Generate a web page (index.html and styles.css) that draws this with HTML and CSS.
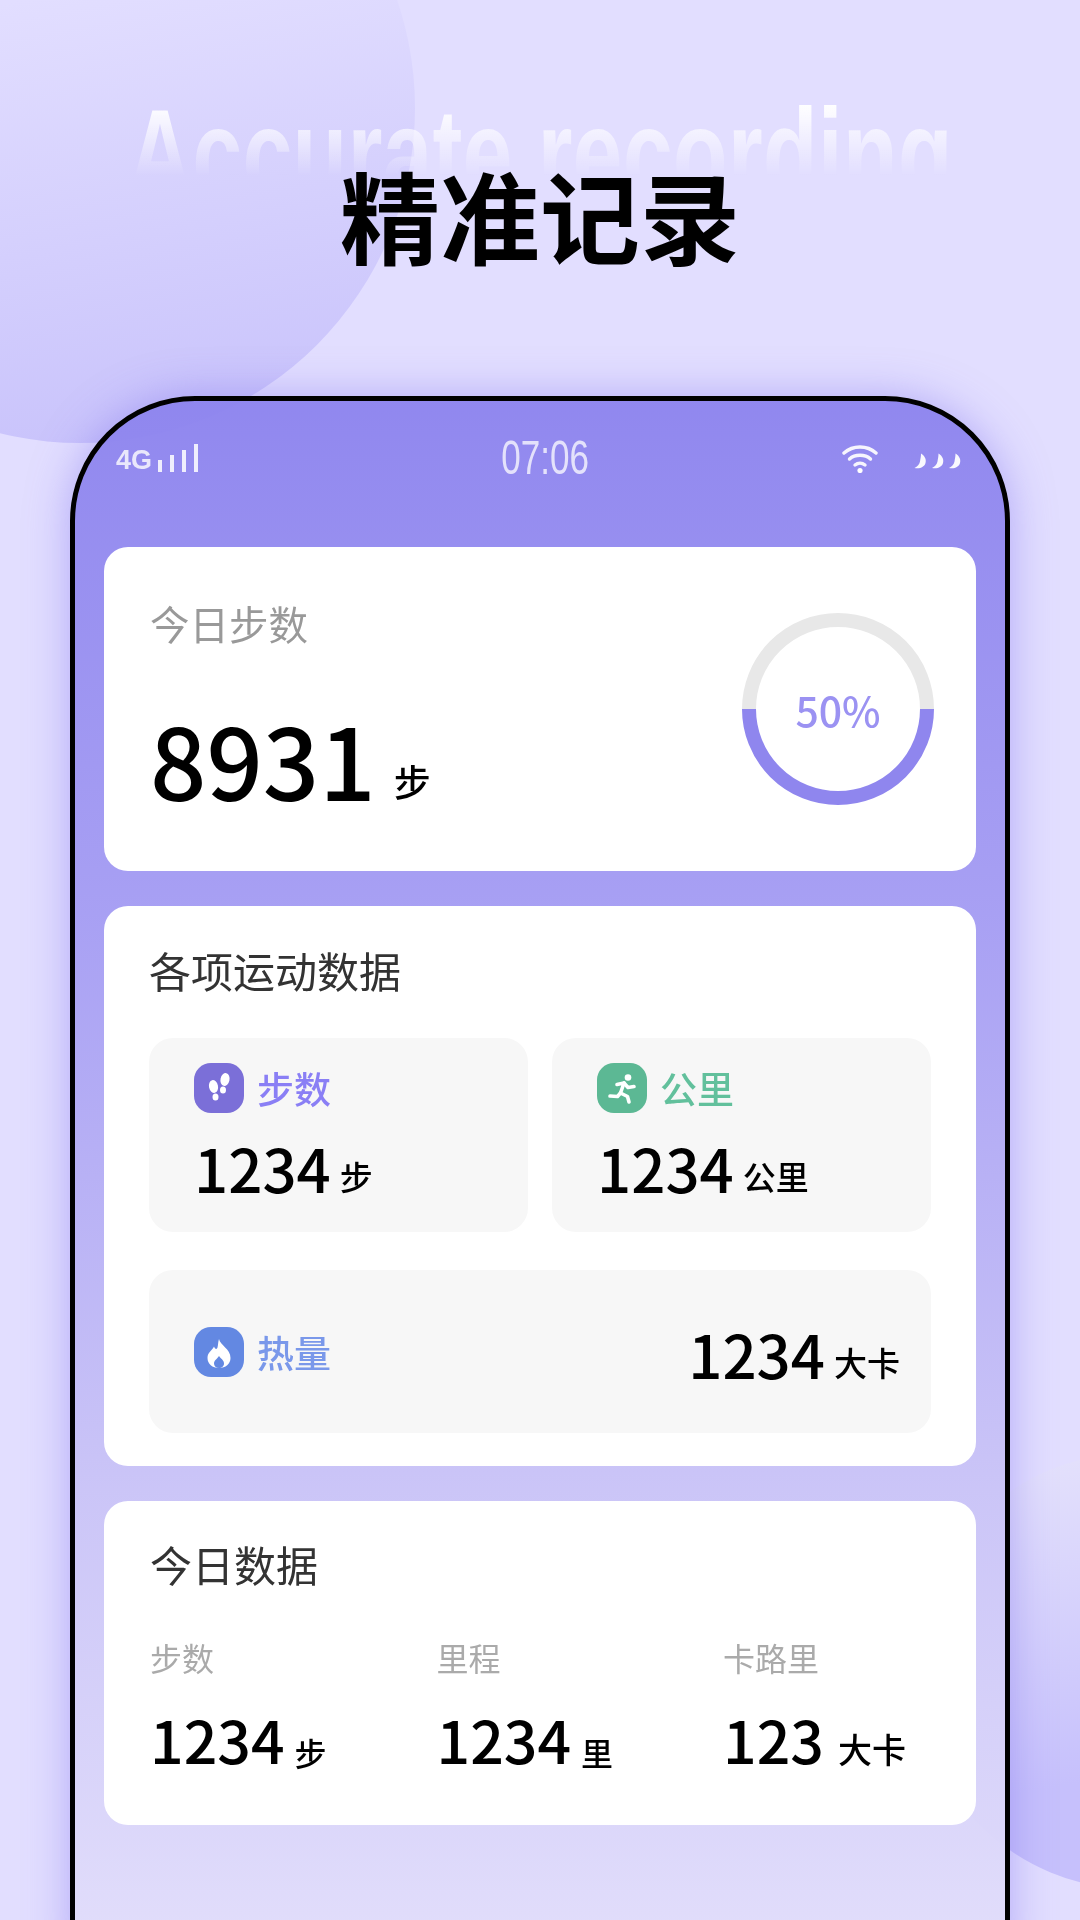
FILE: index.html
```html
<!DOCTYPE html>
<html lang="zh-CN">
<head>
<meta charset="utf-8">
<title>精准记录</title>
<link rel="stylesheet" href="styles.css">
</head>
<body>
<div class="page">
  <div class="blob blob-a"></div>
  <div class="blob blob-b"></div>
  <header class="hero">
    <div class="hero-en">Accurate recording</div>
    <h1 class="hero-cn">精准记录</h1>
  </header>
  <main class="phone">
    <div class="status">
      <div class="status-left">
        <span class="net">4G</span>
        <span class="bars"><i class="b1"></i><i class="b2"></i><i class="b3"></i><i class="b4"></i></span>
      </div>
      <div class="clock"><span>07:06</span></div>
      <div class="status-right">
        <svg class="wifi" viewBox="0 0 36 30" width="36" height="30" aria-hidden="true">
          <g fill="none" stroke="#fff" stroke-width="3.4" stroke-linecap="round" opacity=".92">
            <path d="M2 10C11 2 25 2 34 10"/>
            <path d="M7.5 16C13 11 23 11 28.5 16"/>
            <path d="M13 22C16 19.6 20 19.6 23 22"/>
          </g>
          <circle cx="18" cy="27.5" r="2.6" fill="#fff"/>
        </svg>
        <svg class="moons" viewBox="0 0 47 16" width="47" height="16" aria-hidden="true">
          <g fill="#fff" opacity=".95">
            <path d="M7 0.500C11 3 12.500 6.500 11.500 10C10.500 14 6 16 0.500 15C3.500 13.500 5.500 11.500 6 8.500C6.400 6 7 3.500 7 0.500Z"/>
            <path d="M24.500 0.500C28.500 3 30 6.500 29 10C28 14 23.500 16 18 15C21 13.500 23 11.500 23.500 8.500C23.900 6 24.500 3.500 24.500 0.500Z"/>
            <path d="M41.500 0.500C45.500 3 47 6.500 46 10C45 14 40.500 16 35 15C38 13.500 40 11.500 40.500 8.500C40.900 6 41.500 3.500 41.500 0.500Z"/>
          </g>
        </svg>
      </div>
    </div>

    <section class="card card-today">
      <div class="today-text">
        <div class="today-label">今日步数</div>
        <div class="today-value"><span class="today-num">8931</span><span class="today-unit">步</span></div>
      </div>
      <div class="ring">
        <svg viewBox="0 0 192 192" width="192" height="192" aria-hidden="true">
          <path d="M7 96A89 89 0 0 1 185 96" fill="none" stroke="#e8e8e8" stroke-width="14"/>
          <path d="M7 96A89 89 0 0 0 185 96" fill="none" stroke="#8f86ee" stroke-width="14"/>
        </svg>
        <span class="ring-text">50%</span>
      </div>
    </section>

    <section class="card card-sports">
      <h2 class="card-title">各项运动数据</h2>
      <div class="tiles">
        <div class="tile">
          <div class="tile-head">
            <span class="ico ico-steps">
              <svg viewBox="0 0 50 50" width="50" height="50" aria-hidden="true">
                <g fill="#fff">
                  <ellipse cx="19.500" cy="23.500" rx="4.500" ry="6.500" transform="rotate(-12 19.500 23.500)"/>
                  <ellipse cx="21.500" cy="34" rx="3" ry="3.500"/>
                  <ellipse cx="31" cy="16.500" rx="4.500" ry="6.500" transform="rotate(12 31 16.500)"/>
                  <ellipse cx="29" cy="27" rx="3" ry="3.500"/>
                </g>
              </svg>
            </span>
            <span class="tile-name name-steps">步数</span>
          </div>
          <div class="val"><span class="num">1234</span><span class="unit">步</span></div>
        </div>
        <div class="tile">
          <div class="tile-head">
            <span class="ico ico-km">
              <svg viewBox="0 0 50 50" width="50" height="50" aria-hidden="true">
                <circle cx="31" cy="14.500" r="3.300" fill="#fff"/>
                <g fill="none" stroke="#fff" stroke-width="3.600" stroke-linecap="round" stroke-linejoin="round">
                  <path d="M20 21.500L27 20L23.500 30L30.500 33.500L32 39"/>
                  <path d="M27 20L31 24.500L37 23.500"/>
                  <path d="M23.500 30L20.500 33.500L13 33"/>
                </g>
              </svg>
            </span>
            <span class="tile-name name-km">公里</span>
          </div>
          <div class="val"><span class="num">1234</span><span class="unit">公里</span></div>
        </div>
        <div class="tile tile-wide">
          <div class="tile-head">
            <span class="ico ico-cal">
              <svg viewBox="0 0 50 50" width="50" height="50" aria-hidden="true">
                <path fill="#fff" d="M25 12C26 18 36.500 22 36.500 31C36.500 37 31.500 41 25 41C18.500 41 13.500 37 13.500 31C13.500 25 18 24 20 19.500C21 22.500 23 22.500 23.500 20.500C24.200 18 24 15 25 12Z"/>
                <path fill="#6388e2" d="M25 29C27 32 30 33 30 36.500C30 39 28 41 25 41C22 41 20 39 20 36.500C20 33.500 23 32 25 29Z"/>
              </svg>
            </span>
            <span class="tile-name name-cal">热量</span>
          </div>
          <div class="val"><span class="num">1234</span><span class="unit">大卡</span></div>
        </div>
      </div>
    </section>

    <section class="card card-daily">
      <h2 class="card-title">今日数据</h2>
      <div class="daily">
        <div class="daily-col">
          <div class="daily-label">步数</div>
          <div class="val"><span class="num">1234</span><span class="unit">步</span></div>
        </div>
        <div class="daily-col">
          <div class="daily-label">里程</div>
          <div class="val"><span class="num">1234</span><span class="unit">里</span></div>
        </div>
        <div class="daily-col">
          <div class="daily-label">卡路里</div>
          <div class="val"><span class="num">123</span><span class="unit unit-far">大卡</span></div>
        </div>
      </div>
    </section>
  </main>
</div>
</body>
</html>
```
FILE: styles.css
```css
* { box-sizing: border-box; }
html, body { margin: 0; padding: 0; }
body { width: 1080px; height: 1920px; overflow: hidden; font-family: "Noto Sans CJK SC", "Noto Sans", sans-serif; color: #000; }

.page {
  position: relative;
  width: 1080px;
  height: 1920px;
  overflow: hidden;
  background: #e2deff;
  filter: blur(.6px);
}

.blob { position: absolute; border-radius: 50%; }
.blob-a {
  left: -255px; top: -227px; width: 670px; height: 670px;
  background: linear-gradient(170deg, #e2deff 35%, #c6c0fb 100%);
}
.blob-b {
  left: 916px; top: 1453px; width: 436px; height: 436px;
  background: linear-gradient(170deg, #e4e1fc 5%, #c6c0fc 70%);
}

.hero { position: relative; height: 396px; padding-top: 164px; text-align: center; }
.hero-en {
  position: absolute;
  left: 0; right: 0; top: 84px;
  height: 100px;
  font-family: "Liberation Sans", sans-serif;
  font-size: 90px;
  font-weight: 700;
  line-height: 100px;
  white-space: nowrap;
  color: transparent;
  background: linear-gradient(180deg, rgba(255,255,255,.95) 16%, rgba(255,255,255,0) 66%);
  -webkit-background-clip: text;
  background-clip: text;
  transform: scaleY(1.4);
  transform-origin: top;
}
.hero-cn { position: relative; margin: 0; font-size: 100px; font-weight: 700; line-height: 100px; }

.phone {
  position: relative;
  width: 940px;
  height: 1560px;
  margin-left: 70px;
  padding: 0 29px;
  border: 5px solid #000;
  border-radius: 125px 125px 0 0;
  background: linear-gradient(180deg, rgba(141,132,238,.96) 0, rgba(166,158,243,.97) 33%, rgba(202,196,247,.97) 70%, rgba(226,222,251,.97) 100%);
  box-shadow: 0 0 42px rgba(132,118,240,.5);
}

.status {
  display: flex;
  align-items: center;
  justify-content: space-between;
  height: 114px;
  margin: 0 15px 32px 12px;
  color: #fff;
}
.status-left { display: flex; align-items: flex-end; gap: 6px; height: 28px; }
.net { font-family: "Liberation Sans", sans-serif; font-size: 27px; font-weight: 700; line-height: 24px; opacity: .8; }
.bars { display: flex; align-items: flex-end; gap: 8.500px; height: 28px; }
.bars i { display: block; width: 3.500px; background: #fff; opacity: .85; }
.bars .b1 { height: 12px; }
.bars .b2 { height: 17px; }
.bars .b3 { height: 22px; }
.bars .b4 { height: 28px; }
.clock { margin-left: 50px; width: 88px; display: flex; justify-content: center; opacity: .75; }
.clock span { display: block; font-family: "Liberation Sans", sans-serif; font-size: 48px; line-height: 48px; transform: scaleX(.73); }
.status-right { display: flex; align-items: center; gap: 36px; }
.wifi, .moons { display: block; }
.moons { margin-top: 5px; }

.card { background: #fff; border-radius: 24px; margin-bottom: 35px; }

.card-today {
  display: flex;
  align-items: center;
  justify-content: space-between;
  height: 324px;
  padding: 0 42px 0 46px;
}
.today-text { padding-bottom: 7px; }
.today-label { font-size: 39.500px; line-height: 40px; color: #999; }
.today-value { display: flex; align-items: flex-end; height: 100px; margin-top: 65px; }
.today-num { font-size: 99px; font-weight: 500; line-height: 100px; }
.today-unit { font-size: 37px; font-weight: 500; line-height: 54px; margin-left: 18px; }

.ring { display: grid; width: 192px; height: 192px; place-items: center; }
.ring svg, .ring-text { grid-area: 1 / 1; }
.ring svg { display: block; }
.ring-text { font-size: 41px; font-weight: 500; line-height: 42px; color: #9b92f2; }

.card-title { margin: 0; font-size: 42px; font-weight: 400; line-height: 40px; color: #333; }
.card-sports { padding: 44px 45px 33px; }
.card-sports .card-title { margin-bottom: 48px; }

.tiles { display: grid; grid-template-columns: 379px 379px; column-gap: 24px; row-gap: 38px; }
.tile { height: 194px; padding: 25px 0 0 45px; background: #f7f7f7; border-radius: 24px; }
.tile-wide {
  grid-column: 1 / 3;
  height: 163px;
  padding: 0 31px 0 45px;
  display: flex;
  align-items: center;
  justify-content: space-between;
}
.tile-head { display: flex; align-items: center; gap: 13px; height: 50px; }
.ico { display: block; width: 50px; height: 50px; border-radius: 17px; }
.ico svg { display: block; }
.ico-steps { background: #7b6fd8; }
.ico-km { background: #5cb894; }
.ico-cal { background: #6388e2; }
.tile-name { font-size: 37px; font-weight: 500; line-height: 50px; }
.name-steps { color: #8a7ff5; }
.name-km { color: #62c09c; }
.name-cal { color: #7a98ea; }

.val { display: flex; align-items: flex-end; height: 60px; margin-top: 24px; }
.tile-wide .val { margin-top: 2px; }
.num { font-size: 60px; font-weight: 500; line-height: 60px; }
.unit { font-size: 33px; font-weight: 500; line-height: 41px; margin-left: 9px; }

.card-daily { padding: 43px 0 56px 46px; }
.card-daily .card-title { margin-bottom: 57px; }
.daily { display: grid; grid-template-columns: 286.500px 286.500px 1fr; }
.daily-label { font-size: 32px; line-height: 32px; color: #aaa; }
.daily-col .val { margin-top: 36px; }
.daily-col .num { font-size: 59px; }
.daily-col .unit { font-size: 32px; line-height: 34px; margin-left: 10px; }
.daily-col .unit-far { font-size: 34px; margin-left: 14px; line-height: 41px; }
```
